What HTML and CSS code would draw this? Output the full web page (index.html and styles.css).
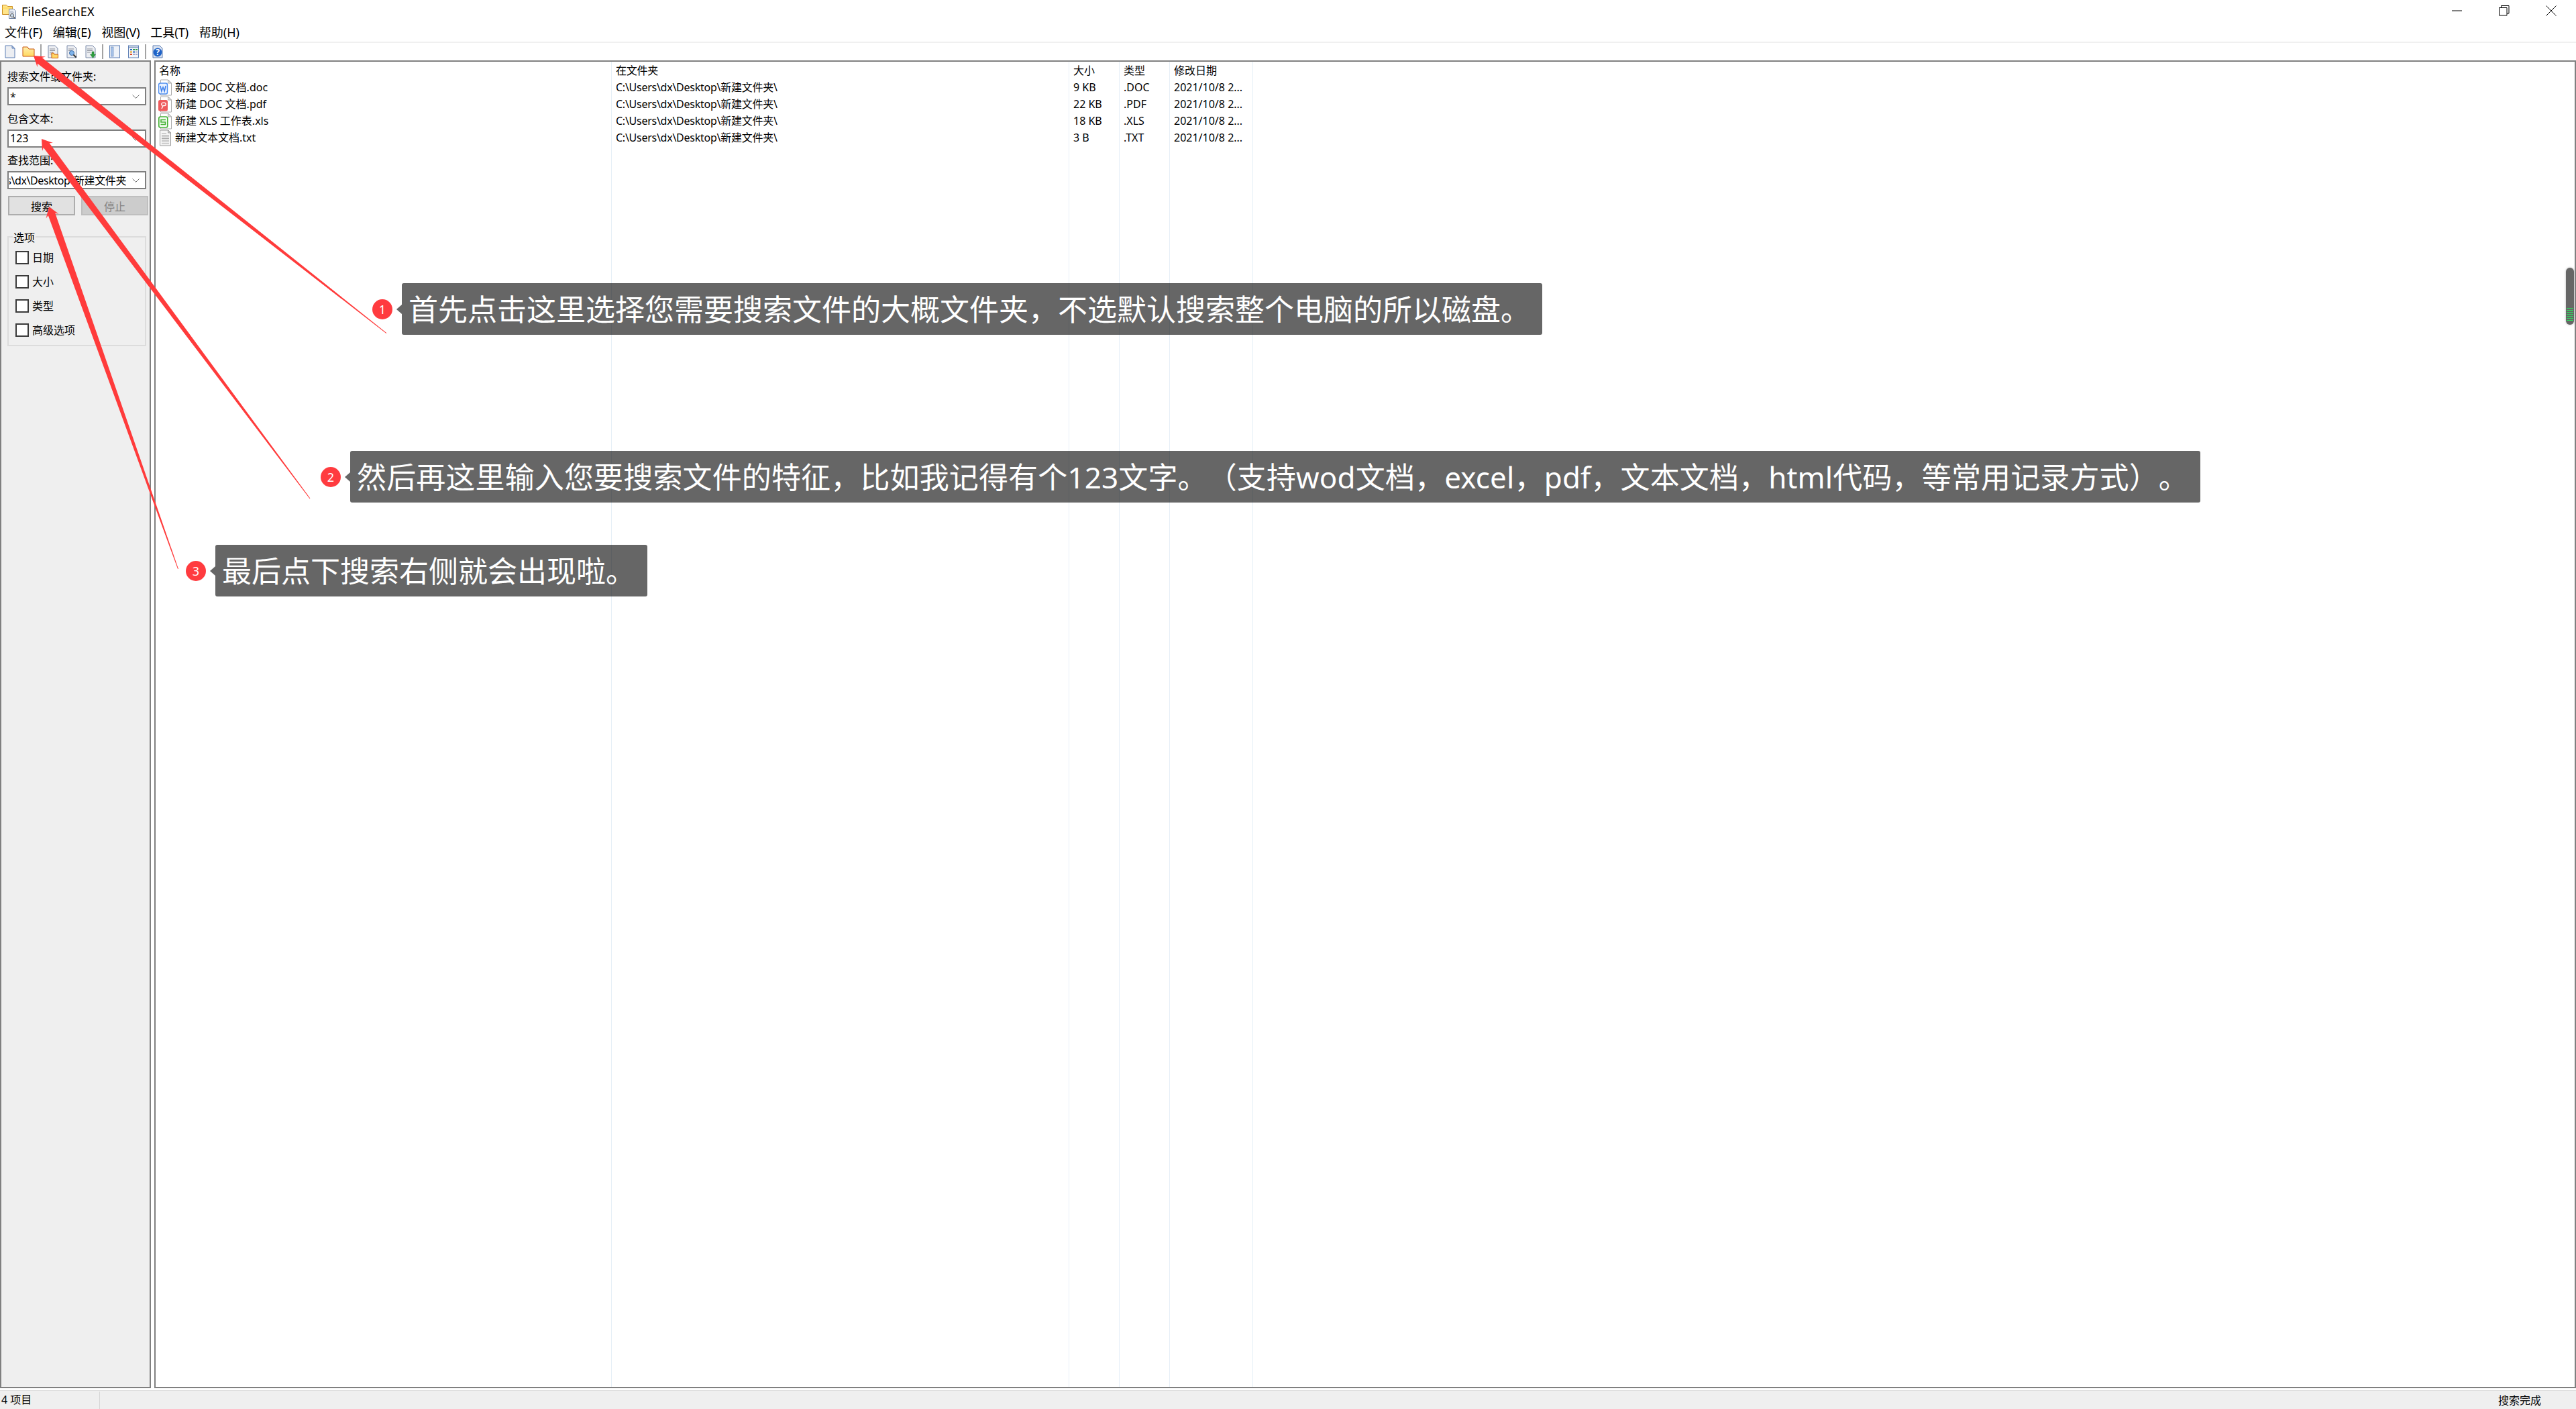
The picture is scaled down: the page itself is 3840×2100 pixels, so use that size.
FILE: index.html
```html
<!DOCTYPE html>
<html lang="zh-CN">
<head>
<meta charset="utf-8">
<title>FileSearchEX</title>
<link rel="stylesheet" href="styles.css">
</head>
<body>
<div class="window">
  <header class="titlebar">
    <svg class="app-icon" width="23" height="23" viewBox="0 0 23 23">
      <path d="M1.500 2.500h6l2 2h7v12h-15z" fill="#ffe58a" stroke="#c98a1e"/>
      <path d="M1.500 7h15" stroke="#ffd34f"/>
      <path d="M11.500 8.500h7l3 3v11h-10z" fill="#eef1f7" stroke="#6b7f9f"/>
      <path d="M13 12h5M13 14h6" stroke="#9aa7bb"/>
      <circle cx="16" cy="18" r="2.500" fill="#cfe0f2" stroke="#555"/>
      <path d="M18 20l2 2" stroke="#444" stroke-width="1.500"/>
    </svg>
    <span class="app-name">FileSearchEX</span>
    <div class="controls">
      <span class="control"><svg width="16" height="16" viewBox="0 0 16 16"><path d="M0 8h15" stroke="#000" fill="none"/></svg></span>
      <span class="control"><svg width="16" height="16" viewBox="0 0 16 16"><path d="M.5 3.500h11.500v11.500H.5zM3.500 3.500V.5h11.500v11.500h-3" stroke="#000" fill="none"/></svg></span>
      <span class="control"><svg width="16" height="16" viewBox="0 0 16 16"><path d="M.5.5l15 15M15.500.5l-15 15" stroke="#000" fill="none"/></svg></span>
    </div>
  </header>
  <nav class="menubar">
    <span>文件(F)</span><span>编辑(E)</span><span>视图(V)</span><span>工具(T)</span><span>帮助(H)</span>
  </nav>
  <div class="toolbar">
    <span class="tool"><svg width="16" height="20" viewBox="0 0 16 20"><path d="M1 1h10l4 4v14H1z" fill="#eceef2" stroke="#5d7fb5"/><path d="M11 1v4h4z" fill="#b9c9e2" stroke="#5d7fb5"/></svg></span>
    <span class="tool"><svg width="19" height="16" viewBox="0 0 19 16"><defs><linearGradient id="fold" x1="0" y1="0" x2="0" y2="1"><stop offset="0" stop-color="#fff0b0"/><stop offset="1" stop-color="#ffd75e"/></linearGradient></defs><path d="M1 1h7l2 3h8v11H1z" fill="url(#fold)" stroke="#c9560c"/></svg></span>
    <span class="sep"></span>
    <span class="tool"><svg width="16" height="20" viewBox="0 0 16 20"><path d="M1 1h10l4 4v14H1z" fill="#eceef2" stroke="#7a8aa8"/><path d="M3 6h8M3 8.500h8M3 11h5M3 13.500h4" stroke="#8b8f99"/><path d="M6 12h3l1 2h5.500v5.500H6z" fill="#ffd766" stroke="#c9560c"/></svg></span>
    <span class="tool"><svg width="16" height="20" viewBox="0 0 16 20"><path d="M1 1h10l4 4v14H1z" fill="#eceef2" stroke="#7a8aa8"/><path d="M3 6h8M3 8.500h5" stroke="#8b8f99"/><circle cx="8" cy="12" r="3.500" fill="#7fb4ea" stroke="#3d6ca8"/><path d="M10.500 14.500l4 4" stroke="#333" stroke-width="2"/></svg></span>
    <span class="tool"><svg width="16" height="20" viewBox="0 0 16 20"><path d="M1 1h10l4 4v14H1z" fill="#eceef2" stroke="#7a8aa8"/><path d="M3 6h8M3 8.500h8M3 11h5" stroke="#8b8f99"/><path d="M10 10h3v4h2.500l-4 5.500-4-5.500H10z" fill="#2f9e3f" stroke="#1f7a2c" stroke-width=".5"/></svg></span>
    <span class="sep"></span>
    <span class="tool"><svg width="16" height="20" viewBox="0 0 16 20"><rect x=".5" y="1" width="15" height="18" fill="#eef2f9" stroke="#5d7fb5"/><rect x="2.500" y="3" width="3.500" height="14" fill="#a9c4ea" stroke="#5d7fb5" stroke-width=".6"/></svg></span>
    <span class="tool"><svg width="16" height="20" viewBox="0 0 16 20"><rect x=".5" y="1" width="15" height="18" fill="#f4f5f8" stroke="#5d7fb5"/><path d="M1 3.500h14" stroke="#8ea4c6" stroke-width="2"/><path d="M3 6h3v2H3z" fill="#2a66c4"/><path d="M7 6h3v2H7z" fill="#2a9e4c"/><path d="M11 6h3v2h-3z" fill="#2a9e4c"/><path d="M3 9.500h3v2H3z" fill="#e3a020"/><path d="M7 9.500h3v2H7z" fill="#2a66c4"/><path d="M11 9.500h3v2h-3z" fill="#a8a8c8"/><path d="M3 13h3v2H3z" fill="#d9482b"/><path d="M7 13h3v2H7z" fill="#a8a8c8"/><path d="M11 13h3v2h-3z" fill="#a8a8c8"/></svg></span>
    <span class="sep"></span>
    <span class="tool"><svg width="16" height="20" viewBox="0 0 16 20"><path d="M1 1h10l4 4v14H1z" fill="#dbe3f0" stroke="#5d7fb5"/><circle cx="8" cy="11" r="6.500" fill="#1f63c8"/><text class="help-mark" x="8" y="15" text-anchor="middle">?</text></svg></span>
  </div>
  <main class="workspace">
    <aside class="panel">
      <div class="field">
        <label class="field-label">搜索文件或文件夹:</label>
        <div class="combo"><span class="combo-text">*</span><svg class="chev" width="11" height="6" viewBox="0 0 11 6"><path d="M.5.500l5 5 5-5" stroke="#666" fill="none"/></svg></div>
      </div>
      <div class="field">
        <label class="field-label">包含文本:</label>
        <div class="combo"><span class="combo-text">123</span><svg class="chev" width="11" height="6" viewBox="0 0 11 6"><path d="M.5.500l5 5 5-5" stroke="#666" fill="none"/></svg></div>
      </div>
      <div class="field">
        <label class="field-label">查找范围:</label>
        <div class="combo"><span class="combo-text combo-clip"><span>s\dx\Desktop\新建文件夹</span></span><svg class="chev" width="11" height="6" viewBox="0 0 11 6"><path d="M.5.500l5 5 5-5" stroke="#666" fill="none"/></svg></div>
      </div>
      <div class="actions">
        <span class="btn">搜索</span>
        <span class="btn btn-off">停止</span>
      </div>
      <section class="group">
        <div class="group-title">选项</div>
        <div class="check"><i></i><span>日期</span></div>
        <div class="check"><i></i><span>大小</span></div>
        <div class="check"><i></i><span>类型</span></div>
        <div class="check"><i></i><span>高级选项</span></div>
      </section>
    </aside>
    <section class="list">
      <div class="col col-name">
        <div class="cell head">名称</div>
        <div class="cell file"><svg class="ficon" width="21" height="25" viewBox="0 0 21 25"><path d="M3.500 1h11l5 5v18h-16z" fill="#fff" stroke="#aaa"/><path d="M14.500 1v5h5z" fill="#e6e6e6" stroke="#aaa"/><rect x=".5" y="6" width="13" height="16" rx="2.500" fill="#e8f1ff" stroke="#4f8ff0" stroke-width="1.500"/><path d="M3 10l1.800 8 2.200-6 2.200 6 1.800-8" fill="none" stroke="#3f80ea" stroke-width="1.500"/></svg><span>新建 DOC 文档.doc</span></div>
        <div class="cell file"><svg class="ficon" width="21" height="25" viewBox="0 0 21 25"><path d="M3.500 1h11l5 5v18h-16z" fill="#fff" stroke="#aaa"/><path d="M14.500 1v5h5z" fill="#e6e6e6" stroke="#aaa"/><rect y="6" width="14" height="16.500" rx="2.500" fill="#ee5a5c"/><path d="M5 19l2-4.500h2a2.200 2.200 0 0 0 0-4.400H7a2.200 2.200 0 0 0-1 4.200" fill="none" stroke="#fff" stroke-width="1.400"/></svg><span>新建 DOC 文档.pdf</span></div>
        <div class="cell file"><svg class="ficon" width="21" height="25" viewBox="0 0 21 25"><path d="M3.500 1h11l5 5v18h-16z" fill="#fff" stroke="#aaa"/><path d="M14.500 1v5h5z" fill="#e6e6e6" stroke="#aaa"/><rect x=".8" y="6" width="13" height="16" rx="2.500" fill="#f2fbf0" stroke="#46b337" stroke-width="1.600"/><path d="M11 10.500H4v3.500h6.500v3.500H3.500" fill="none" stroke="#46b337" stroke-width="1.600"/></svg><span>新建 XLS 工作表.xls</span></div>
        <div class="cell file"><svg class="ficon" width="21" height="25" viewBox="0 0 21 25"><path d="M2.500 1h12l4 4v19h-16z" fill="#f5f5f5" stroke="#999"/><path d="M14.500 1v4h4z" fill="#ddd" stroke="#999"/><path d="M5 6h7M5 8.500h11M5 11h11M5 13.500h11M5 16h11M5 18.500h11M5 21h11" stroke="#a6a6a6"/></svg><span>新建文本文档.txt</span></div>
      </div>
      <div class="col col-path">
        <div class="cell head">在文件夹</div>
        <div class="cell">C:\Users\dx\Desktop\新建文件夹\</div>
        <div class="cell">C:\Users\dx\Desktop\新建文件夹\</div>
        <div class="cell">C:\Users\dx\Desktop\新建文件夹\</div>
        <div class="cell">C:\Users\dx\Desktop\新建文件夹\</div>
      </div>
      <div class="col col-size">
        <div class="cell head">大小</div>
        <div class="cell">9 KB</div>
        <div class="cell">22 KB</div>
        <div class="cell">18 KB</div>
        <div class="cell">3 B</div>
      </div>
      <div class="col col-type">
        <div class="cell head">类型</div>
        <div class="cell">.DOC</div>
        <div class="cell">.PDF</div>
        <div class="cell">.XLS</div>
        <div class="cell">.TXT</div>
      </div>
      <div class="col col-date">
        <div class="cell head">修改日期</div>
        <div class="cell">2021/10/8 2...</div>
        <div class="cell">2021/10/8 2...</div>
        <div class="cell">2021/10/8 2...</div>
        <div class="cell">2021/10/8 2...</div>
      </div>
      <div class="col col-rest"></div>
    </section>
  </main>
  <footer class="statusbar">
    <span class="status-count">4 项目</span>
    <span class="status-done">搜索完成</span>
  </footer>

  <div class="note note-1"><span class="badge">1</span><span class="note-text">首先点击这里选择您需要搜索文件的大概文件夹，不选默认搜索整个电脑的所以磁盘。</span></div>
  <div class="note note-2"><span class="badge">2</span><span class="note-text">然后再这里输入您要搜索文件的特征，比如我记得有个123文字。（支持wod文档，excel，pdf，文本文档，html代码，等常用记录方式）。</span></div>
  <div class="note note-3"><span class="badge">3</span><span class="note-text">最后点下搜索右侧就会出现啦。</span></div>

  <svg class="arrows" width="3840" height="2100" viewBox="0 0 3840 2100">
    <polygon points="50,83 68,84.400 62.800,86.100 576.300,496.300 575.700,497 56,94.700 55.600,100.100"/>
    <polygon points="62,207 79,213 73.600,213.300 462.400,742.800 461.600,743.200 64.800,219.900 63,225"/>
    <polygon points="73,308 87.400,318.700 82.200,317.500 266,848 265,848 71.800,321.100 68.600,325.500"/>
  </svg>

  <div class="blob"><div class="blob-lines"></div></div>
</div>
</body>
</html>
```
FILE: styles.css
```css
* { box-sizing: border-box; }
html, body { margin: 0; padding: 0; background: #fff; }
body { font-family: "Noto Sans", "Noto Sans CJK SC", sans-serif; font-size: 16px; color: #000; }

.window { position: relative; width: 3840px; height: 2100px; display: flex; flex-direction: column; overflow: hidden; background: #fff; }

.titlebar { height: 32px; display: flex; align-items: center; padding-left: 2px; }
.app-icon { flex: none; margin-right: 7px; }
.app-name { font-size: 18px; line-height: 24px; letter-spacing: .2px; padding-top: 1px; }
.controls { margin-left: auto; margin-right: 2px; display: flex; }
.control { width: 70px; height: 32px; display: flex; align-items: center; justify-content: center; }

.menubar { height: 32px; display: flex; gap: 15.6px; align-items: center; padding: 2px 0 0 7px; border-bottom: 2px solid #f0f0f0; font-size: 18px; line-height: 24px; }

.toolbar { height: 26px; display: flex; align-items: center; padding-left: .5px; }
.tool { width: 28px; height: 26px; display: flex; align-items: center; justify-content: center; }
.sep { width: 2px; height: 22px; margin: 0 3px; background: #a3a3a3; }
.help-mark { font: 700 12px "Noto Sans", sans-serif; fill: #fff; }

.workspace { flex: 1; min-height: 0; display: flex; gap: 5px; margin-bottom: 3px; }

.panel { width: 225px; flex: none; background: #efefef; border: 2px solid #808080; padding: 10px 0 0 9px; }
.field { margin-bottom: 7.5px; }
.field-label { display: block; height: 24px; line-height: 24px; margin-bottom: 4px; }
.combo { width: 207px; height: 27px; background: #fff; border: 2px solid #7f7f7f; display: flex; align-items: center; padding-left: 2px; position: relative; }
.combo-text { line-height: 22px; white-space: nowrap; }
.combo-clip { width: 174px; overflow: hidden; display: flex; justify-content: flex-end; margin-left: -1px; letter-spacing: -.4px; }
.combo-clip span { flex: none; }
.chev { position: absolute; right: 8px; top: 9px; }

.actions { display: flex; gap: 9px; margin: 10px 0 0 1px; }
.btn { width: 100px; height: 29px; background: #e1e1e1; border: 2px solid #adadad; display: flex; align-items: center; justify-content: center; }
.btn-off { background: #ccc; border-color: #bfbfbf; color: #838383; }

.group { width: 207px; height: 164px; margin-top: 31px; border: 2px solid #dcdcdc; padding: 0 0 0 10px; }
.group-title { width: max-content; height: 20px; line-height: 20px; margin: -10px 0 10px -4px; padding: 0 1px; background: #efefef; }
.check { height: 36px; display: flex; gap: 5px; align-items: flex-start; line-height: 20px; }
.check i { width: 20px; height: 20px; flex: none; background: #fff; border: 2px solid #3a3a3a; }

.list { flex: 1; min-width: 0; display: flex; border: 2px solid #808080; }
.col { flex: none; border-right: 1px solid #e6eff7; padding-left: 6px; }
.col-name { width: 680px; padding-left: 5px; }
.col-path { width: 682px; }
.col-path .cell { letter-spacing: -.26px; }
.col-size { width: 75px; }
.col-type { width: 75px; }
.col-date { width: 124px; }
.col-rest { flex: 1; border-right: 0; }
.cell { height: 25px; line-height: 25px; white-space: nowrap; }
.head { height: 26px; padding-top: 1px; }
.file { display: flex; align-items: center; gap: 4px; }
.ficon { flex: none; margin-left: -1px; }

.statusbar { height: 28px; flex: none; display: flex; align-items: center; background: #efefef; border-top: 1px solid #dcdcdc; line-height: 24px; }
.status-count { width: 149px; height: 26px; padding-left: 2px; border-right: 1px solid #d6d6d6; }
.status-done { margin-left: auto; margin-right: 52px; }

.note { position: absolute; display: flex; align-items: center; }
.note-1 { left: 555px; top: 422px; }
.note-2 { left: 478px; top: 672px; }
.note-3 { left: 277px; top: 812px; }
.note-2 .note-text { letter-spacing: .14px; }
.badge { width: 30px; height: 30px; border-radius: 50%; background: #ff3b3f; color: #fff; font-size: 18px; line-height: 30px; text-align: center; margin-right: 14px; }
.note-text { position: relative; height: 77px; padding: 0 18px 0 10px; background: rgba(0, 0, 0, .6); border-radius: 3px; color: #fff; font-family: "Noto Sans", "Noto Sans CJK SC", sans-serif; font-size: 44px; line-height: 79px; white-space: nowrap; text-spacing-trim: space-all; }
.note-text::before { content: ""; position: absolute; left: -8px; top: 32px; border: 7px solid transparent; border-left: 0; border-right: 8px solid #666; }

.arrows { position: absolute; left: 0; top: 0; pointer-events: none; }
.arrows polygon { fill: #ff3b3b; }

.blob { position: absolute; left: 3825px; top: 399px; width: 12px; height: 85px; border-radius: 6px; background: #666; box-shadow: 0 0 3px rgba(102, 102, 102, .5); padding: 60px 1px 0; }
.blob-lines { height: 21px; background: repeating-linear-gradient(to bottom, #2fdc5e 0 1px, transparent 1px 3px); }
```
